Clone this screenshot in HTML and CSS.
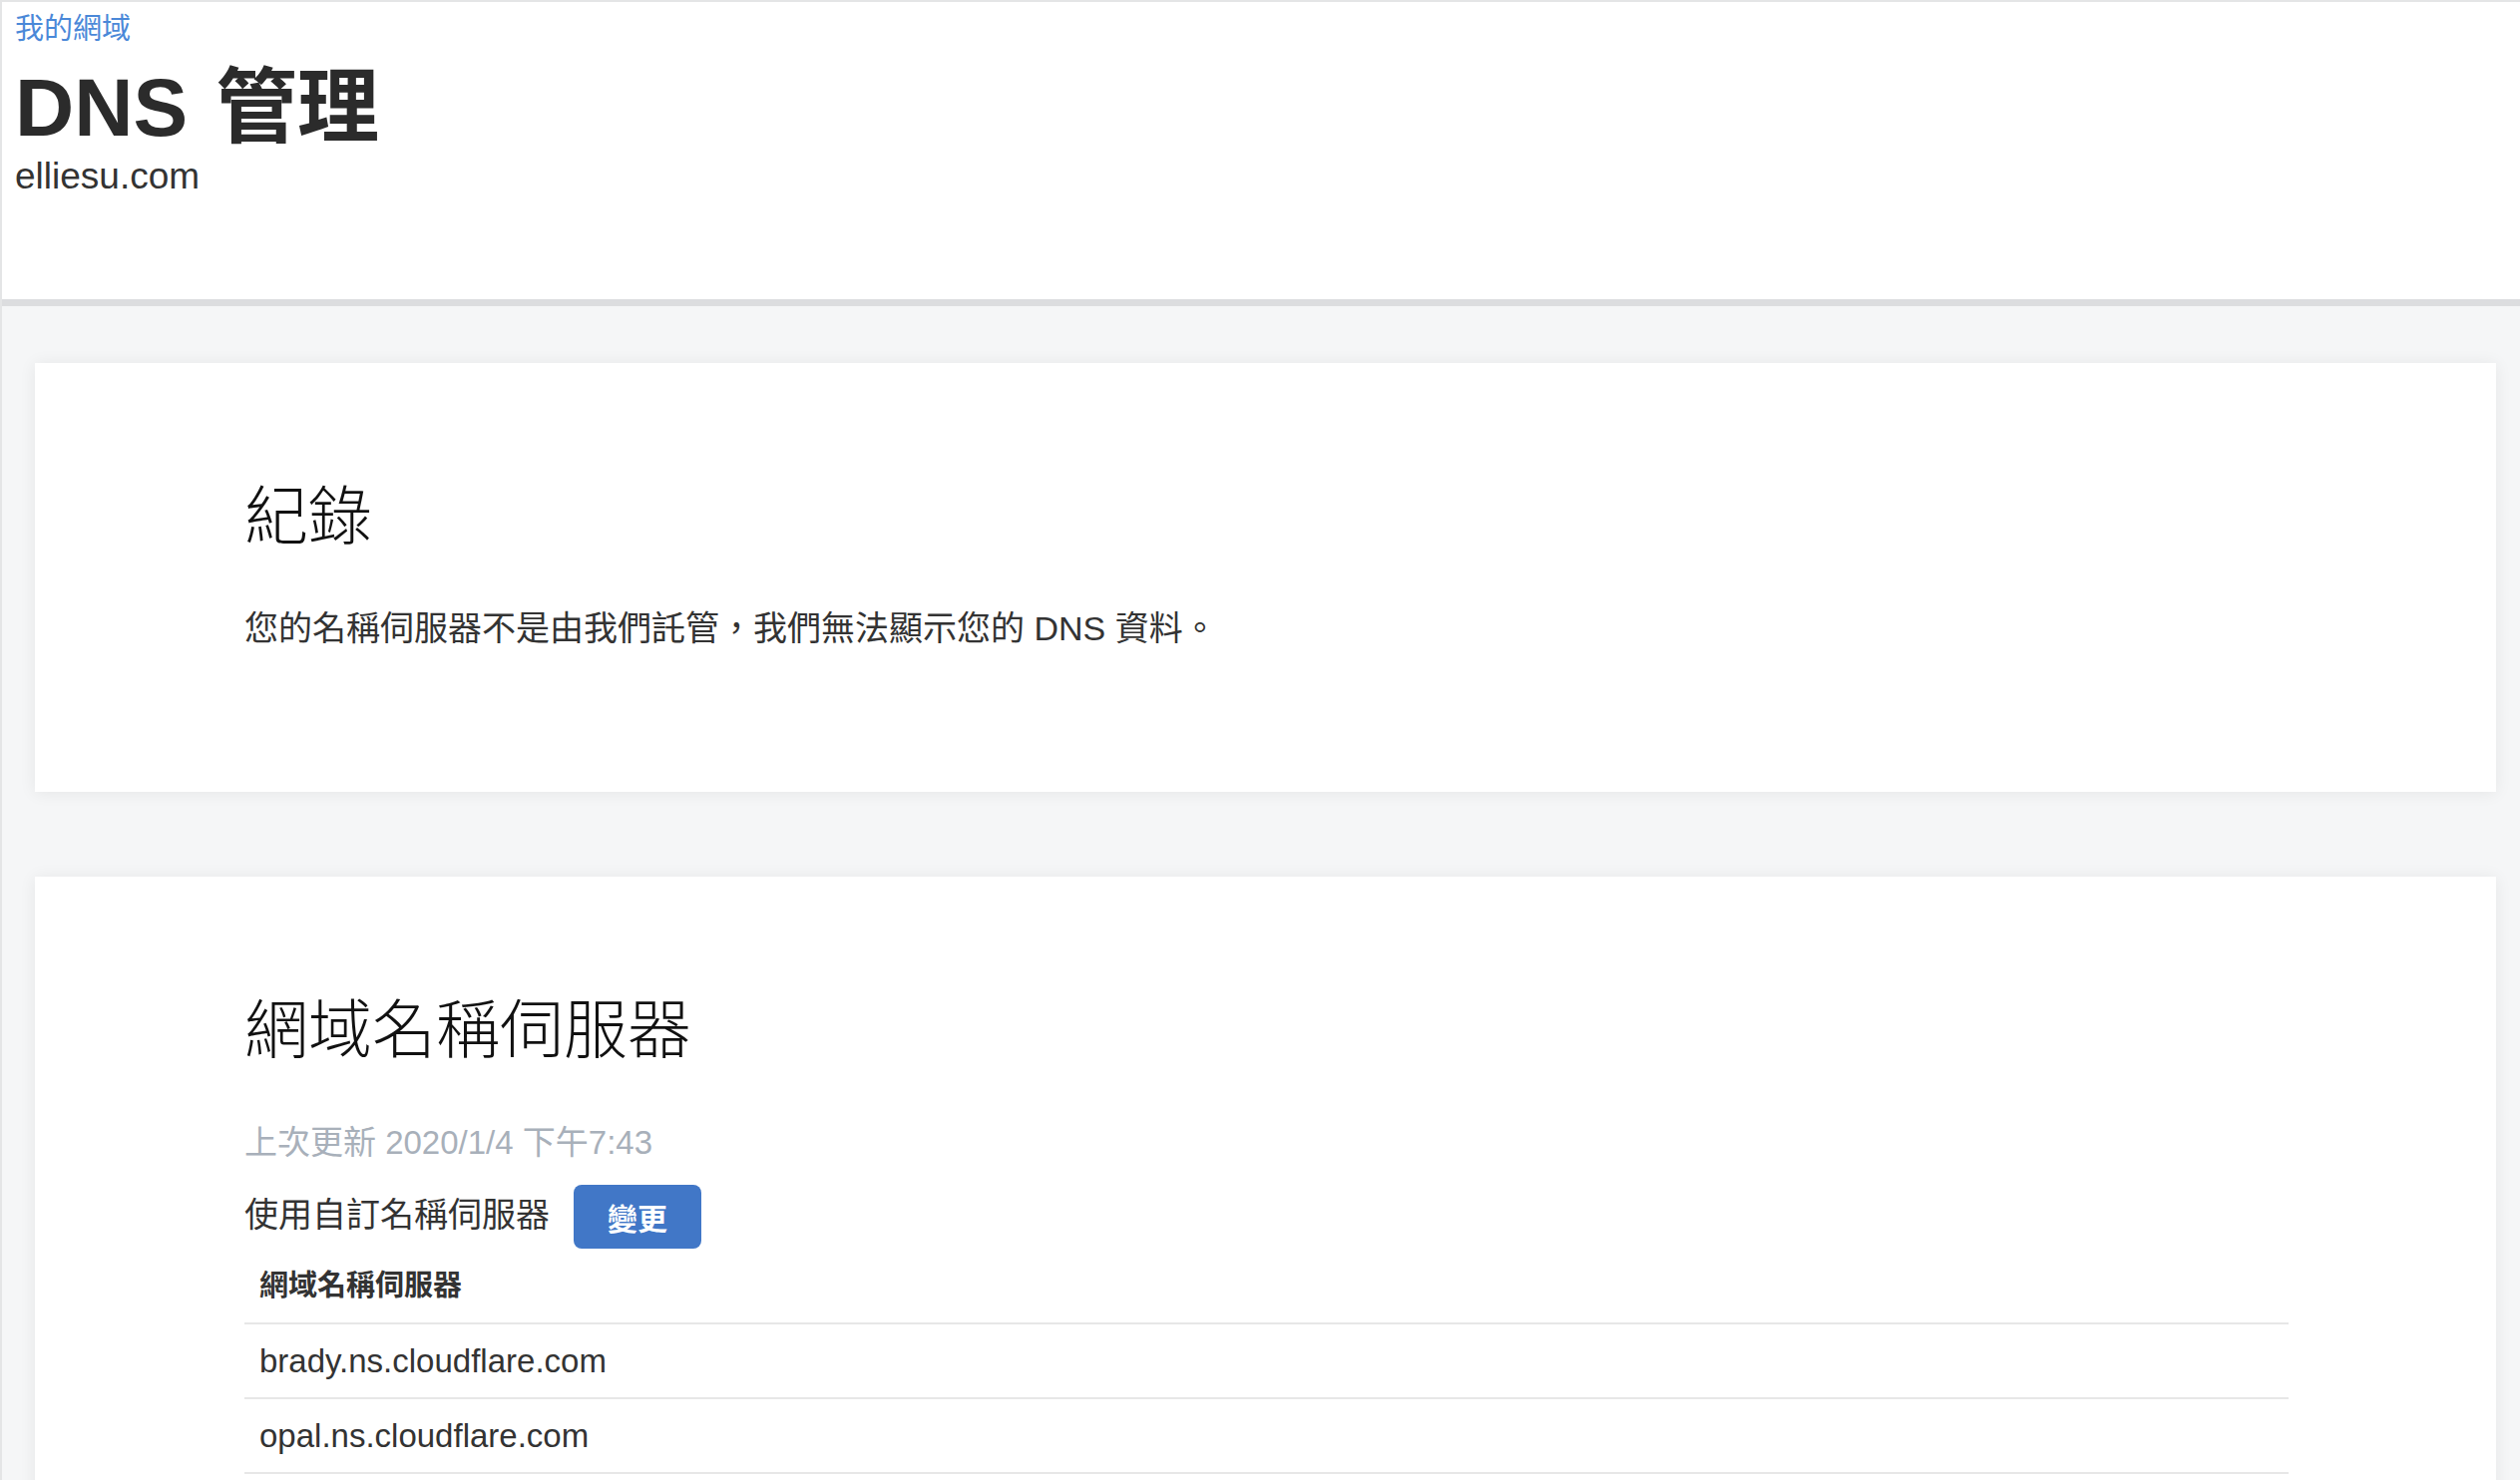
FILE: index.html
```html
<!DOCTYPE html>
<html lang="zh-Hant">
<head>
    <meta charset="UTF-8">
    <title>DNS 管理</title>
    <link rel="stylesheet" href="styles.css">
</head>
<body>
    <div class="page">
        <!-- Заголовок страницы -->
        <header class="page-header">
            <a class="back-link" href="#">我的網域</a>
            <h1 class="page-title">DNS 管理</h1>
            <div class="domain-name">elliesu.com</div>
        </header>

        <main class="content">
            <!-- Записи -->
            <section class="card">
                <h2 class="card-title">紀錄</h2>
                <p class="card-text">您的名稱伺服器不是由我們託管，我們無法顯示您的 DNS 資料。</p>
            </section>

            <!-- Серверы имён -->
            <section class="card card-ns">
                <h2 class="card-title">網域名稱伺服器</h2>
                <div class="updated">上次更新 2020/1/4 下午7:43</div>
                <div class="ns-mode">
                    <span class="ns-mode-label">使用自訂名稱伺服器</span>
                    <button class="change-btn">變更</button>
                </div>
                <table class="ns-table">
                    <thead>
                        <tr><th>網域名稱伺服器</th></tr>
                    </thead>
                    <tbody>
                        <tr><td>brady.ns.cloudflare.com</td></tr>
                        <tr><td>opal.ns.cloudflare.com</td></tr>
                    </tbody>
                </table>
            </section>
        </main>
    </div>
</body>
</html>
```

FILE: styles.css
```css
body {
    margin: 0;
    background: #f5f6f7;
    font-family: "Liberation Sans", "Noto Sans CJK TC", sans-serif;
    color: #333;
}

.page {
    border-left: 2px solid #e4e5e6;
    border-top: 2px solid #e4e5e6;
    min-height: 1482px;
}

/* Шапка */
.page-header {
    background: white;
    padding: 9px 0 102px 13px;
    border-bottom: 7px solid #dcdddf;
}

.back-link {
    display: block;
    font-size: 29px;
    line-height: 36px;
    color: #4a88d8;
    text-decoration: none;
}

.page-title {
    margin: 16px 0 0;
    font-size: 82px;
    line-height: 90px;
    font-weight: bold;
    word-spacing: 5px;
    color: #2b2b2b;
}

.domain-name {
    margin-top: 2px;
    font-size: 37px;
    line-height: 43px;
    color: #333;
}

/* Карточки */
.content {
    padding: 57px 24px 0 33px;
}

.card {
    background: white;
    padding: 116px 208px 138px 210px;
    margin-bottom: 85px;
    box-shadow: 0 1px 16px rgba(0,0,0,0.07);
}

.card-title {
    margin: 0;
    font-size: 64px;
    line-height: 77px;
    font-weight: 300;
    color: #111;
}

.card-text {
    margin: 48px 0 0;
    font-size: 34px;
    line-height: 51px;
    color: #333;
}

.updated {
    margin-top: 50px;
    font-size: 33px;
    line-height: 48px;
    color: #a8b0ba;
}

.ns-mode {
    display: flex;
    align-items: center;
    gap: 24px;
    margin-top: 18px;
    font-size: 34px;
    color: #333;
}

.ns-mode-label {
    padding-bottom: 9px;
}

.change-btn {
    background: #4177c7;
    color: white;
    font-family: inherit;
    font-size: 30px;
    font-weight: bold;
    height: 64px;
    padding: 0 34px;
    border: none;
    border-radius: 8px;
    cursor: pointer;
}

.ns-table {
    width: 100%;
    border-collapse: collapse;
}

.ns-table th,
.ns-table td {
    text-align: left;
    padding: 0 15px;
    border-bottom: 2px solid #e7e7e7;
}

.ns-table th {
    height: 68px;
    padding-bottom: 6px;
    font-size: 29px;
    font-weight: bold;
    color: #333;
}

.ns-table td {
    height: 73px;
    font-size: 33px;
    color: #333;
}
```
